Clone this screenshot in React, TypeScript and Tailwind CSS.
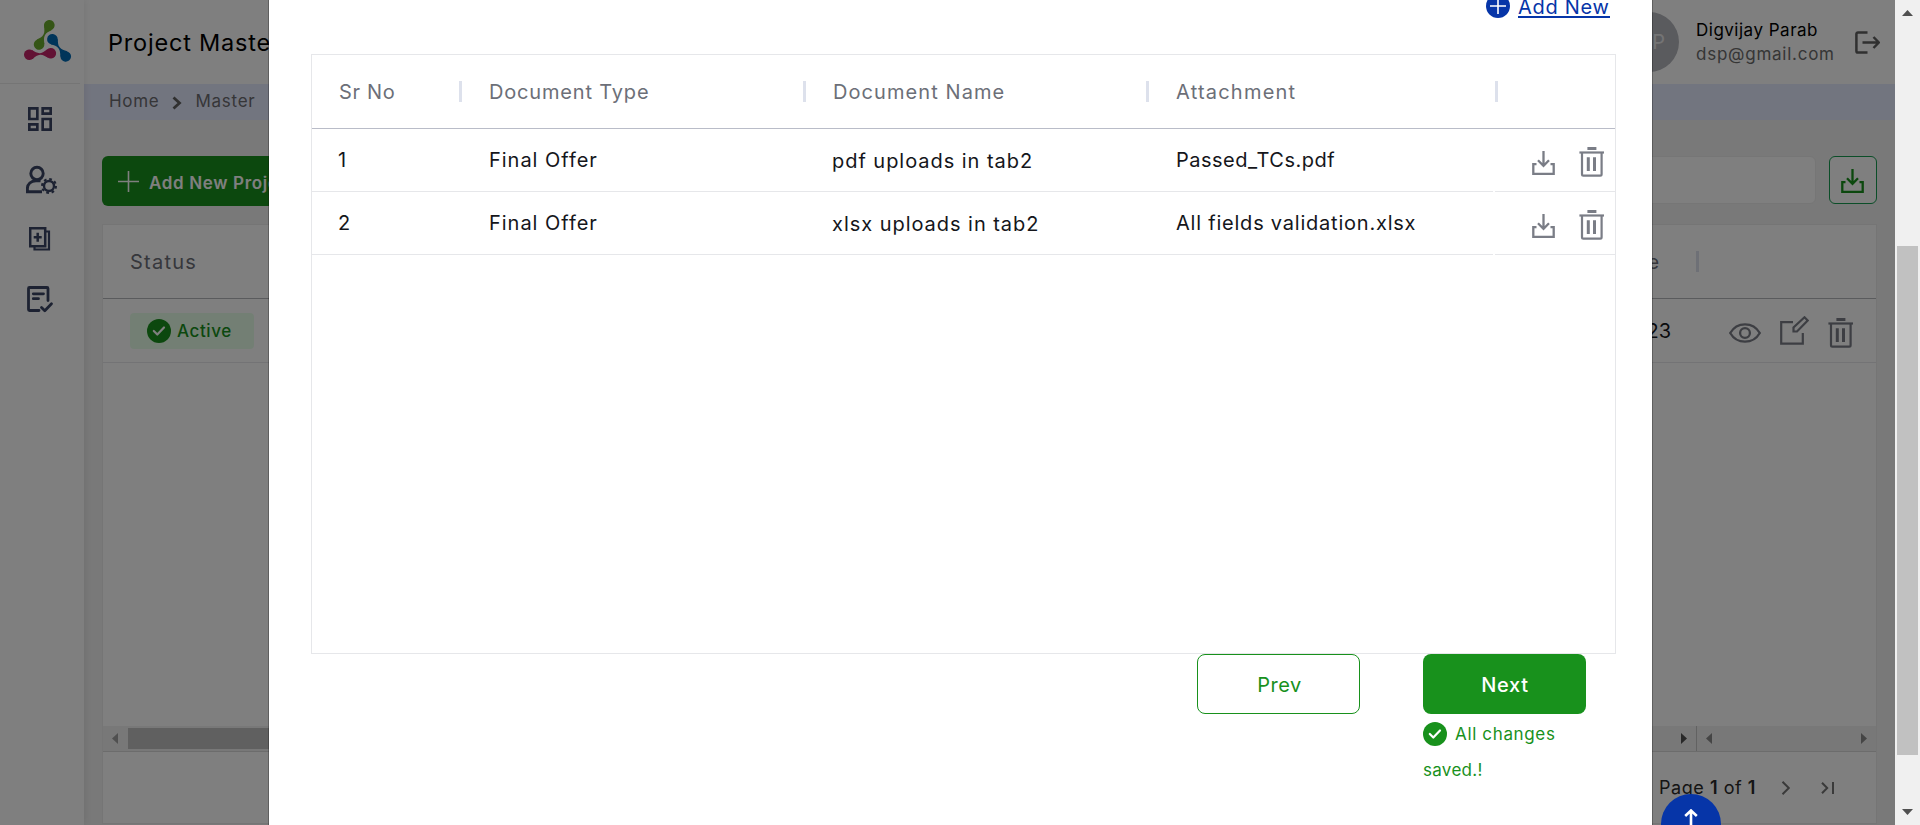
import React from "react";
import { MdOutlineDashboard } from "react-icons/md";

function DownloadIcon({ className }: { className: string }) {
  return (
    <svg width="23" height="24" viewBox="0 0 23 24" fill="none" stroke="currentColor" strokeWidth="2.300" className={className}>
      <path d="M11.5 0v14.5M6 9.3l5.500 5.500L17 9.3" />
      <path d="M4.500 13.200H1.300V22.800h20.400v-9.600h-3.200" />
    </svg>
  );
}

function TrashIcon() {
  return (
    <svg width="25" height="30" viewBox="0 0 25 30" fill="none" stroke="currentColor" strokeWidth="2.200" className="shrink-0">
      <path d="M8.400 1.500h9" strokeWidth="3" />
      <path d="M.4 5.500h24.600" />
      <path d="M3 5.500v21.700c0 .9.5 1.400 1.400 1.400h16.800c.9 0 1.400-.5 1.400-1.400V5.500" />
      <path d="M9.300 10.300v13.800M15.500 10.300v13.800" strokeWidth="3" />
    </svg>
  );
}

function CheckCircle() {
  return (
    <svg width="24" height="24" viewBox="0 0 24 24" className="shrink-0">
      <circle cx="12" cy="12" r="12" fill="#18911c" />
      <path d="M6.800 12l3.500 3.500 6.700-7" fill="none" stroke="#fff" strokeWidth="2.200" strokeLinecap="round" strokeLinejoin="round" />
    </svg>
  );
}

function Dumbbell({ t, l, fill }: { t: string; l: number; fill: string }) {
  const m = l / 2;
  return (
    <g transform={t} fill={fill}>
      <circle r="5.300" />
      <circle cx={l} r="5.300" />
      <path d={`M3 -4.400 C6 -2.400 8 -.8 ${m} -.8 C${l - 8} -.8 ${l - 6} -2.400 ${l - 3} -4.400 V4.400 C${l - 6} 2.400 ${l - 8} .8 ${m} .8 C8 .8 6 2.400 3 4.400Z`} />
    </g>
  );
}

function Logo() {
  return (
    <svg width="48" height="43" viewBox="24 20 48 43">
      <Dumbbell t="translate(49.300 25.300) rotate(118)" l={21.800} fill="#6aaa2c" />
      <Dumbbell t="translate(52.400 39.300) rotate(52)" l={21.700} fill="#006ab4" />
      <Dumbbell t="translate(29.300 54.700) rotate(-4)" l={21.600} fill="#c42468" />
    </svg>
  );
}

function UserGear() {
  return (
    <svg width="32" height="30" viewBox="26 165 32 30" fill="none" stroke="currentColor" strokeWidth="2.900">
      <circle cx="37" cy="173.500" r="6.200" />
      <path d="M42 191.700H27.400v-3.200c0-4.500 3.500-7.700 8.600-7.700h4.500" />
      <circle cx="49" cy="186" r="5" strokeWidth="2.400" />
      <circle cx="49" cy="186" r="7" strokeWidth="2" strokeDasharray="2.750 2.750" />
    </svg>
  );
}

function CopyPlus() {
  return (
    <svg width="22" height="25" viewBox="29 227 22 25" fill="none" stroke="currentColor" strokeWidth="2.200">
      <path d="M30.200 228.200h15v18h-15zM37.700 232.700v9M33.700 237.200h8" strokeWidth="2.500" />
      <path d="M46 231.500h3v18H34.500V247" />
    </svg>
  );
}

function FormCheck() {
  return (
    <svg width="27" height="27" viewBox="27 286 27 27" fill="none" stroke="currentColor" strokeWidth="2.800" strokeLinecap="round" strokeLinejoin="round">
      <path d="M39 310.500H29.500c-.7 0-1-.4-1-1V288.500c0-.6.3-1 1-1h17.500c.6 0 1 .4 1 1v12" />
      <path d="M33.300 293.800h10.200M33.300 298.700h5.200M41.500 307.500l3.300 3.300 6.700-7" />
    </svg>
  );
}

function Triangle({ dir, className }: { dir: "l" | "r" | "u" | "d"; className: string }) {
  if (dir === "u" || dir === "d")
    return (
      <svg width="11" height="6" viewBox="0 0 11 6" className={className}>
        <path d={dir === "u" ? "M0 6L5.500 0 11 6z" : "M0 0h11L5.500 6z"} fill="currentColor" />
      </svg>
    );
  return (
    <svg width="6" height="11" viewBox="0 0 6 11" className={className}>
      <path d={dir === "l" ? "M6 0v11L0 5.500z" : "M0 0v11L6 5.500z"} fill="currentColor" />
    </svg>
  );
}

const rows = [
  { no: "1", name: "pdf uploads in tab2", file: "Passed_TCs.pdf", fileTrack: "tracking-[0.5px]" },
  { no: "2", name: "xlsx uploads in tab2", file: "All fields validation.xlsx", fileTrack: "tracking-[0.78px]" },
];

function HeadCell({ label, className }: { label: string; className: string }) {
  return (
    <div className={`flex shrink-0 items-center justify-between whitespace-nowrap ${className}`}>
      <span>{label}</span>
      <i className="h-[21px] w-[3px] bg-[#dde1ec]" />
    </div>
  );
}

function Modal() {
  return (
    <div className="absolute left-[268px] top-0 flex h-[825px] w-[1385px] flex-col border-x border-black/25 bg-white bg-clip-padding pl-[42px] pr-[36px] text-[20px] font-normal">
      <div className="flex h-[54px] shrink-0 items-start justify-end pr-[6px]">
        <div className="-mt-[6px] flex items-start gap-[8px] text-[#0635a8]">
          <svg width="24" height="24" viewBox="0 0 24 24">
            <circle cx="12" cy="12" r="12" fill="#0635a8" />
            <path d="M4 12h16M12 4v16" stroke="#fff" strokeWidth="1.600" />
          </svg>
          <span className="h-[24px] w-[92px] whitespace-nowrap border-b-2 border-[#0635a8] text-[20px] leading-[26px] tracking-[0.7px]">Add New</span>
        </div>
      </div>
      <div className="h-[600px] shrink-0 border border-[#e6e7ea]">
        <div className="flex h-[74px] border-b border-[#b9bcc8] text-[#6c6f78]">
          <HeadCell label="Sr No" className="w-[150px] pl-[27px] tracking-[0.7px]" />
          <HeadCell label="Document Type" className="w-[344px] pl-[27px] tracking-[0.83px]" />
          <HeadCell label="Document Name" className="w-[343px] pl-[27px] tracking-[1.080px]" />
          <HeadCell label="Attachment" className="w-[349px] pl-[27px] tracking-[1.220px]" />
        </div>
        {rows.map((r) => (
          <div key={r.no} className="flex h-[63px] gap-[2px] whitespace-nowrap text-[#15161b]">
            <div className="flex w-[1181px] items-center border-b border-[#e6e7ea]">
              <span className="w-[150px] pl-[26px]">{r.no}</span>
              <span className="w-[344px] pl-[27px] tracking-[0.980px]">Final Offer</span>
              <span className="w-[343px] pl-[26px] pt-[2px] tracking-[0.960px]">{r.name}</span>
              <span className={`pl-[27px] ${r.fileTrack}`}>{r.file}</span>
            </div>
            <div className="flex flex-1 items-center gap-[24px] border-b border-[#e6e7ea] pl-[37px] pt-[3px] text-[#7a7d86]">
              <DownloadIcon className="mt-[3px] shrink-0" />
              <TrashIcon />
            </div>
          </div>
        ))}
      </div>
      <div className="flex justify-end gap-[63px] pr-[30px]">
        <button className="flex h-[60px] w-[163px] items-center justify-center rounded-[8px] border border-[#18911c] pl-[2px] pt-[2px] tracking-[0.5px] text-[#18911c]">Prev</button>
        <div className="w-[163px]">
          <button className="flex h-[60px] w-full items-center justify-center rounded-[8px] bg-[#18911c] pl-[1px] pt-[2px] font-medium tracking-[0.7px] text-white">Next</button>
          <div className="mt-[2px] text-[17px] leading-[36px] text-[#18911c]">
            <div className="flex items-center gap-[8px] tracking-[0.65px]">
              <CheckCircle />
              All changes
            </div>
            <div className="tracking-[0.300px]">saved.!</div>
          </div>
        </div>
      </div>
    </div>
  );
}

function Sidebar() {
  return (
    <aside className="relative flex w-[84px] shrink-0 flex-col bg-white text-[#3a4564] shadow-[0_0_8px_rgba(0,0,0,0.1)]">
      <div className="mr-[4px] h-[84px] border-b border-[#ebebeb] pl-[24px] pt-[20px]">
        <Logo />
      </div>
      <div className="pl-[24px] pt-[19px]">
        <MdOutlineDashboard size={32} />
      </div>
      <div className="pl-[26px] pt-[30px]">
        <UserGear />
      </div>
      <div className="pl-[29px] pt-[32px]">
        <CopyPlus />
      </div>
      <div className="pl-[27px] pt-[34px]">
        <FormCheck />
      </div>
    </aside>
  );
}

function ProjectPage() {
  return (
    <div className="flex h-full">
      <Sidebar />
      <main className="flex min-w-0 flex-1 flex-col bg-[#f2f2f2]">
        <header className="flex h-[84px] shrink-0 items-center bg-white pl-[24px] pr-[15px]">
          <h1 className="flex-1 pt-[1px] text-[23.500px] tracking-[0.8px] text-black">Project Master</h1>
          <div className="flex h-[60px] w-[60px] items-center justify-end rounded-full bg-[#b4b6bc] pr-[14px] text-[20px] text-[#e8e8ea]">DP</div>
          <div className="ml-[17px] w-[159px] whitespace-nowrap text-[17px] leading-[24px]">
            <div className="tracking-[0.500px] text-black">Digvijay Parab</div>
            <div className="tracking-[0.750px] text-[#6c6c6c]">dsp@gmail.com</div>
          </div>
          <svg width="25" height="23" viewBox="0 0 25 23" fill="none" stroke="#606060" strokeWidth="2.500">
            <path d="M12.500 1.400H3c-1 0-1.600.6-1.600 1.600v17c0 1 .6 1.600 1.600 1.600h9.500M7.500 11.500H24M18.500 6l5.300 5.500-5.300 5.500" />
          </svg>
        </header>
        <nav className="flex h-[36px] shrink-0 items-center bg-[#e5eafe] pb-[1px] pl-[25px] text-[17px] text-[#6c6c70]">
          <span className="tracking-[0.7px]">Home</span>
          <svg width="10" height="14" viewBox="0 0 10 14" className="ml-[13px] mr-[13px] mt-[2px]">
            <path d="M1.500 1.500L7.500 7l-6 5.500" fill="none" stroke="#606060" strokeWidth="2.800" />
          </svg>
          <span className="tracking-[0.75px]">Master</span>
        </nav>
        <div className="mt-[36px] flex h-[50px] shrink-0 items-start justify-between pl-[18px] pr-[18px]">
          <button className="flex h-[50px] w-[210px] items-center gap-[10px] whitespace-nowrap rounded-[6px] bg-[#18911c] pl-[16px] text-[17px] font-semibold tracking-[0.650px] text-white">
            <svg width="21" height="21" viewBox="0 0 21 21" className="shrink-0">
              <path d="M0 10.500h21M10.500 0v21" stroke="#fff" strokeWidth="1.600" />
            </svg>
            <span className="pt-[5px]">Add New Project</span>
          </button>
          <div className="flex gap-[13px]">
            <div className="h-[48px] w-[400px] rounded-[6px] border border-[#ececec] bg-white" />
            <div className="flex h-[48px] w-[48px] items-center justify-center rounded-[6px] border border-[#169c50] bg-white pr-[1px] pt-[1px]">
              <DownloadIcon className="text-[#18911c]" />
            </div>
          </div>
        </div>
        <section className="ml-[18px] mr-[18px] mt-[18px] flex h-[600px] shrink-0 flex-col border border-[#ebebeb] bg-white text-[20px]">
          <div className="flex h-[74px] shrink-0 items-center border-b border-[#b4b6bb] pl-[27px] text-[#6c6f78]">
            <span className="flex-1 tracking-[1.250px]">Status</span>
            <span className="tracking-[0.8px]">End Date</span>
            <i className="ml-[36px] mr-[177px] h-[21px] w-[3px] bg-[#dde1ec]" />
          </div>
          <div className="flex h-[64px] shrink-0 items-center border-b border-[#e6e7ea] pl-[27px] text-[#7a7d86]">
            <div className="flex h-[36px] w-[124px] items-center gap-[6px] rounded-[4px] bg-[#e7ffe9] pl-[17px] text-[17px] font-medium tracking-[0.600px] text-[#18911c]">
              <CheckCircle />
              <span className="pt-[2px]">Active</span>
            </div>
            <span className="flex-1 pr-[59px] text-right text-[#15161b]">31/12/2023</span>
            <svg width="32" height="20" viewBox="0 0 32 20" fill="none" stroke="currentColor" strokeWidth="2.300" className="-ml-[1px] mr-[1px] mt-[5px]">
              <path d="M1.200 10C4.500 4.300 9.800 1.300 16 1.300S27.500 4.300 30.800 10C27.500 15.700 22.200 18.700 16 18.700S4.500 15.700 1.200 10z" />
              <circle cx="16" cy="10" r="4.900" />
            </svg>
            <svg width="29" height="29" viewBox="0 0 29 29" fill="none" stroke="currentColor" strokeWidth="2.200" className="ml-[18px] mr-[1px]">
              <path d="M13 6.200H1.200v21.500h21.600V17" />
              <path d="M13.500 15.500v-4L24.500 1.300l3.200 3.200L17 15.500z" />
            </svg>
            <span className="ml-[18px] mr-[23px] mt-[5px]">
              <TrashIcon />
            </span>
          </div>
          <div className="flex-1" />
          <div className="flex h-[26px] shrink-0 items-center border-b border-[#d8d8d8] bg-[#f0f0f0] text-[#8a8a8a]">
            <Triangle dir="l" className="ml-[9px] mr-[10px] text-[#a0a0a0]" />
            <div className="h-[21px] w-[900px] bg-[#c1c1c1]" />
            <div className="flex-1" />
            <Triangle dir="r" className="mr-[9px] text-[#505050]" />
            <div className="flex h-full w-[180px] items-center justify-between border-l border-[#c4c4c4] pl-[9px] pr-[9px] text-[#8a8a8a]">
              <Triangle dir="l" className="" />
              <Triangle dir="r" className="" />
            </div>
          </div>
          <div className="flex h-[71px] shrink-0 items-center justify-end pr-[41px] text-[18px] text-[#2a2a2a]">
            <span className="mr-[25px] tracking-[0.550px]">
              Page <b className="font-semibold">1</b> of <b className="font-semibold">1</b>
            </span>
            <svg width="54" height="14" viewBox="0 0 54 14" fill="none" stroke="#757575" strokeWidth="2">
              <path d="M1.500 .7l6.300 6.300L1.500 13.300M41 1.700L46.200 7 41 12.300M52 1v12" />
            </svg>
          </div>
        </section>
      </main>
    </div>
  );
}

export default function App() {
  return (
    <div className="flex h-[825px] w-[1920px] overflow-hidden font-['Inter',sans-serif]">
      <div className="relative h-full w-[1895px] overflow-hidden">
        <ProjectPage />
        <div className="absolute inset-0 bg-black/50" />
        <Modal />
        <div className="absolute left-[1661px] top-[794px] flex h-[60px] w-[60px] justify-center rounded-full bg-[#0635a8] pt-[15px]">
          <svg width="14" height="30" viewBox="0 0 14 30" fill="none" stroke="#fff" strokeWidth="2.600">
            <path d="M7 1.500V30M1.200 7L7 1.500 12.800 7" />
          </svg>
        </div>
      </div>
      <div className="flex w-[25px] flex-col items-center bg-[#f0f0f0] text-[#505050]">
        <Triangle dir="u" className="mt-[10px]" />
        <div className="mt-[230px] h-[509px] w-[21px] bg-[#c1c1c1]" />
        <Triangle dir="d" className="mt-[54px]" />
      </div>
    </div>
  );
}
